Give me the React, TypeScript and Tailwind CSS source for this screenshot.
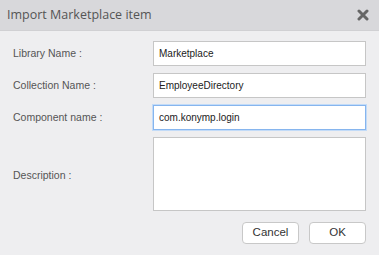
const fields = [
  { label: 'Library Name :', value: 'Marketplace' },
  { label: 'Collection Name :', value: 'EmployeeDirectory' },
  { label: 'Component name :', value: 'com.konymp.login', focused: true },
]

export default function App() {
  return (
    <div className="h-[255px] w-[379px] overflow-hidden bg-[#eeeef0] font-['Liberation_Sans',Arial,sans-serif]">
      <div className="flex h-[31px] items-center justify-between border-b border-[#d0d0d3] bg-[#d8d8db] pl-[7px] pr-[10px]">
        <span className="font-['Open_Sans',sans-serif] text-[12.5px] text-[#555]">Import Marketplace item</span>
        <svg width="12" height="12" viewBox="0 0 12 12" className="text-[#666]">
          <path d="M2 2 L10 10 M10 2 L2 10" stroke="currentColor" strokeWidth="3" strokeLinecap="round" />
        </svg>
      </div>

      <div className="flex flex-col gap-[7px] px-[13px] pt-[10px]">
        {fields.map((field) => (
          <div key={field.label} className="flex h-[25px] items-center">
            <span className="w-[140px] text-[10.5px] text-[#555]">{field.label}</span>
            <div
              className={
                field.focused
                  ? 'flex h-[25px] flex-1 items-center border border-[#86b5ee] bg-white px-[5px] text-[10px] text-[#222] shadow-[0_0_0_1px_#c2dbf8]'
                  : 'flex h-[25px] flex-1 items-center border border-[#c6c6c6] bg-white px-[5px] text-[10px] text-[#222]'
              }
            >
              {field.value}
            </div>
          </div>
        ))}
        <div className="flex h-[74px] items-center">
          <span className="w-[140px] pt-[3px] text-[10.5px] text-[#555]">Description :</span>
          <div className="h-[74px] flex-1 border border-[#c6c6c6] bg-white" />
        </div>
        <div className="mt-[4px] flex justify-end gap-[10px]">
          <button className="h-[22px] w-[57px] rounded-[4px] border border-[#c8c8c8] bg-white text-[11.5px] text-[#333]">
            Cancel
          </button>
          <button className="h-[22px] w-[57px] rounded-[4px] border border-[#c8c8c8] bg-white text-[11.5px] text-[#333]">
            OK
          </button>
        </div>
      </div>
    </div>
  )
}
